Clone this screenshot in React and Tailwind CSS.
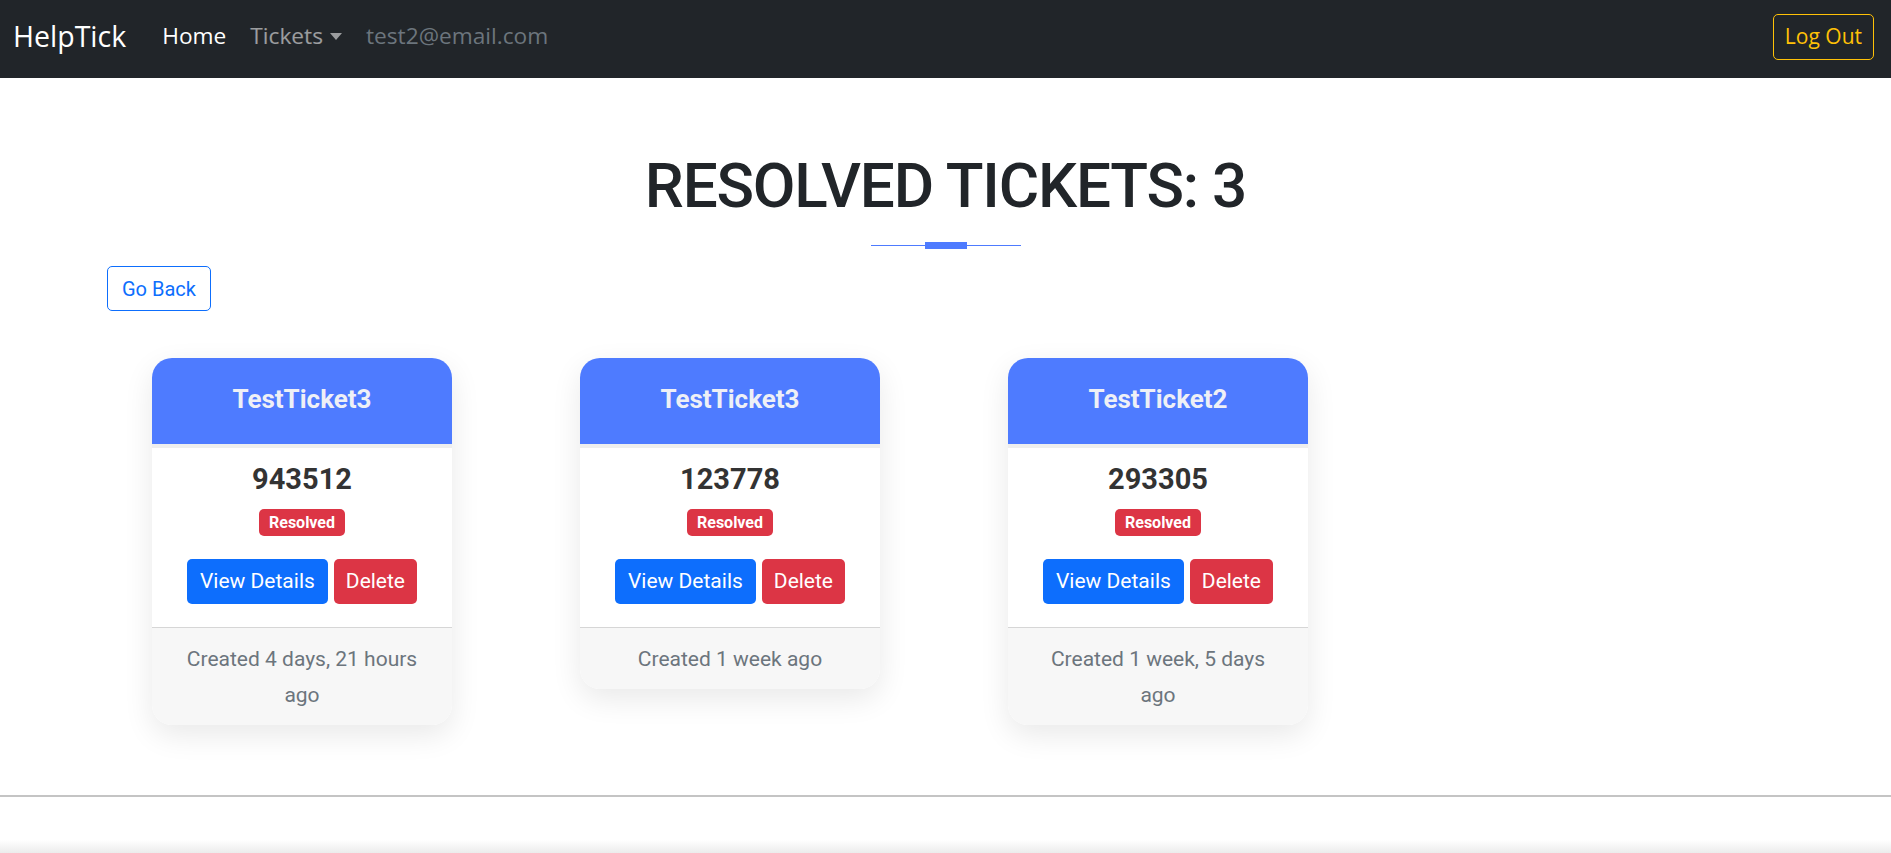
import { useState } from 'react'

const tickets = [
  { title: 'TestTicket3', code: '943512', created: 'Created 4 days, 21 hours ago' },
  { title: 'TestTicket3', code: '123778', created: 'Created 1 week ago' },
  { title: 'TestTicket2', code: '293305', created: 'Created 1 week, 5 days ago' },
]

function Navbar() {
  return (
    <nav className="h-[78px] bg-[#212529] flex items-center pl-[13px] pr-[17px] pb-[5px] font-['Open_Sans',sans-serif]">
      <a className="text-white text-[28.5px] leading-none">HelpTick</a>
      <div className="flex items-center ml-[36px] text-[22.7px]">
        <a className="text-white">Home</a>
        <a className="ml-[24px] text-white/55 flex items-center">
          Tickets
          <span className="ml-[7px] border-x-[6px] border-x-transparent border-t-[7px] border-t-white/55 w-0 h-0" />
        </a>
        <span className="ml-[24px] text-[#6c757d]">test2@email.com</span>
      </div>
      <div className="flex-1" />
      <button className="h-[46px] px-[11px] border border-[#ffc107] text-[#ffc107] rounded-[5px] text-[21px]">
        Log Out
      </button>
    </nav>
  )
}

function TicketCard({ title, code, created }) {
  return (
    <div className="w-[300px] rounded-[20px] overflow-hidden bg-white shadow-[0_10px_30px_rgba(0,0,0,0.09)]">
      <div className="h-[86px] bg-[#4e7bff] border-b-4 border-[#eeeeee] box-content flex items-center justify-center">
        <h3 className="text-[26px] font-bold text-[#eef0f6] mb-[4px]">{title}</h3>
      </div>
      <div className="flex flex-col items-center pt-[12px] pb-[23px]">
        <div className="text-[29px] leading-[38px] font-bold text-[#333333]">{code}</div>
        <span className="mt-[11px] h-[27px] px-[10px] flex items-center rounded-[5px] bg-[#dc3545] text-white text-[16px] font-bold">
          Resolved
        </span>
        <div className="mt-[23px] flex gap-[6px]">
          <button className="h-[45px] px-[13px] rounded-[5px] bg-[#0d6efd] text-white text-[21px]">View Details</button>
          <button className="h-[45px] px-[12px] rounded-[5px] bg-[#dc3545] text-white text-[21px]">Delete</button>
        </div>
      </div>
      <div className="border-t border-[#d6d6d6] bg-[#f7f7f7] px-[30px] pt-[13px] pb-[12px] text-center text-[21px] leading-[36px] text-[#6c757d]">
        {created}
      </div>
    </div>
  )
}

export default function App() {
  const [list] = useState(tickets)
  return (
    <div className="min-h-[853px] bg-white font-['Roboto',sans-serif] flex flex-col">
      <Navbar />
      <main className="pt-[71px]">
        <h1 className="text-center text-[62px] leading-[1.2] font-medium tracking-[-1.2px] text-[#212529]">
          RESOLVED TICKETS: {list.length}
        </h1>
        <div className="mt-[19px] flex items-center justify-center h-[7px]">
          <div className="w-[54px] h-px bg-[#4e7bff]" />
          <div className="w-[42px] h-[7px] bg-[#4e7bff]" />
          <div className="w-[54px] h-px bg-[#4e7bff]" />
        </div>
        <div className="pl-[107px] mt-[17px]">
          <button className="h-[45px] px-[14px] border border-[#0d6efd] text-[#0d6efd] rounded-[5px] text-[20px]">
            Go Back
          </button>
        </div>
        <div className="pl-[152px] mt-[47px] flex items-start gap-[128px]">
          {list.map((t, i) => (
            <TicketCard key={i} {...t} />
          ))}
        </div>
      </main>
      <div className="mt-[70px] border-t-2 border-[#c4c4c4]" />
      <div className="flex-1" />
      <div className="h-[13px] bg-gradient-to-b from-white to-[#ececec]" />
    </div>
  )
}
